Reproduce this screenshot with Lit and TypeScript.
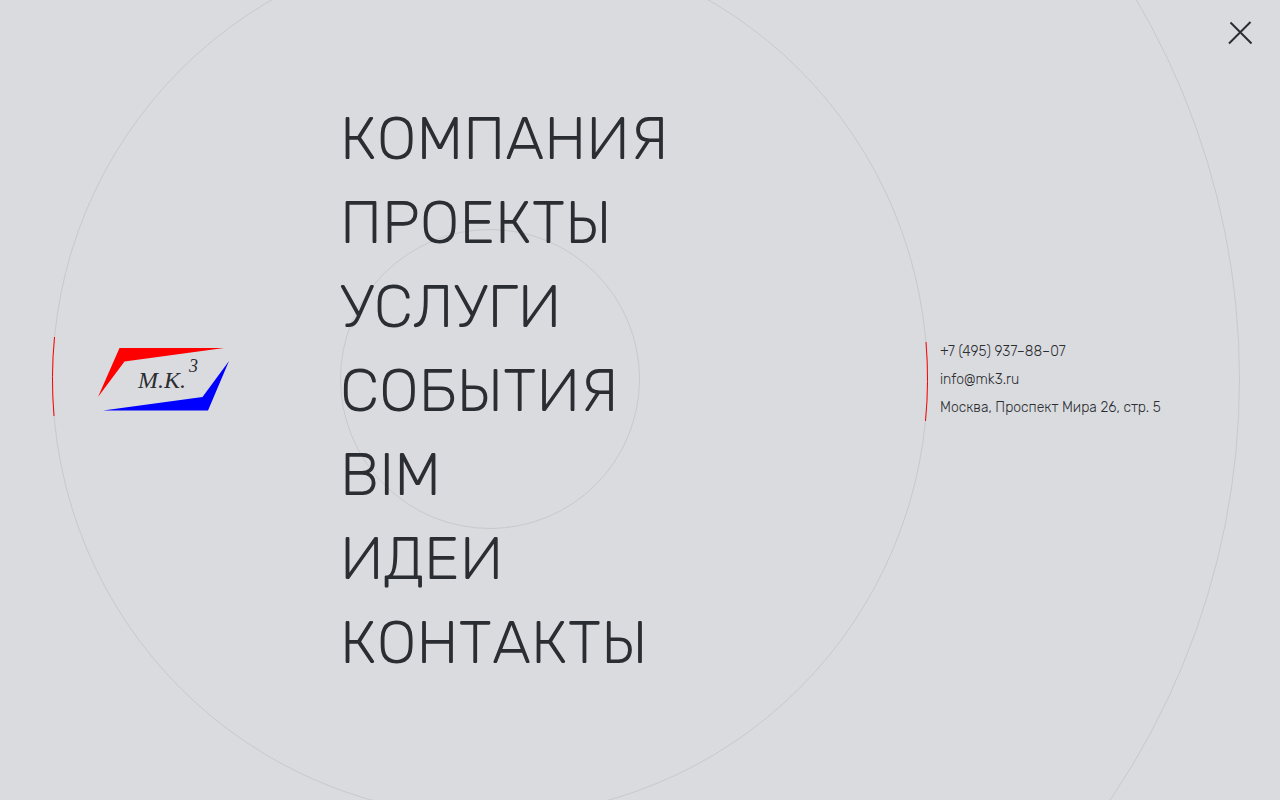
import { LitElement, html, css } from "lit";
import { customElement } from "lit/decorators.js";

const MENU = ["КОМПАНИЯ", "ПРОЕКТЫ", "УСЛУГИ", "СОБЫТИЯ", "BIM", "ИДЕИ", "КОНТАКТЫ"];

@customElement("app-root")
export class AppRoot extends LitElement {
  static styles = css`
    :host {
      display: block;
      font-family: Rubik, Roboto, "Noto Sans", sans-serif;
      font-weight: 300;
      color: #2a2d31;
    }
    .overlay {
      position: relative;
      box-sizing: border-box;
      min-height: 100vh;
      padding: 0 40px;
      overflow: hidden;
      background: #dadbdf;
      display: grid;
      grid-template-columns: 300px 600px 1fr;
      align-items: center;
    }
    .rings {
      position: absolute;
      left: -260px;
      top: calc(50% - 771px);
      width: 1500px;
      height: 1500px;
      pointer-events: none;
    }
    .logo {
      position: relative;
      margin: 0 0 40px 58px;
      line-height: 0;
    }
    .menu {
      position: relative;
      margin: 0 0 18px;
      padding: 0;
      list-style: none;
      font-size: 60px;
      line-height: 84px;
      font-kerning: none;
    }
    a {
      color: inherit;
      text-decoration: none;
    }
    .contacts {
      position: relative;
      margin-bottom: 40px;
      font-size: 14px;
      line-height: 28px;
      font-style: normal;
      display: flex;
      flex-direction: column;
    }
    .close {
      position: absolute;
      top: 12px;
      right: 20px;
      width: 40px;
      height: 40px;
      padding: 0;
      border: 0;
      background: none;
      color: inherit;
      cursor: pointer;
    }
    .close svg {
      display: block;
    }
  `;

  render() {
    return html`
      <div class="overlay">
        <svg class="rings" viewBox="0 0 1500 1500" fill="none" stroke="#c8c9ca" aria-hidden="true">
          <circle cx="750" cy="750" r="149.5" />
          <circle cx="750" cy="750" r="437.5" />
          <circle cx="750" cy="750" r="749.5" />
          <path stroke="#f00" d="M314.5 708A437.5 437.5 0 0 0 314 787" />
          <path stroke="#f00" d="M1186 713A437.5 437.5 0 0 1 1185.5 792" />
        </svg>

        <a class="logo" href="#" aria-label="М.К.3">
          <svg width="132" height="64" viewBox="0 0 132 64">
            <path fill="#f00" d="M21.500 0H126L26.500 13.500L0 49Z" />
            <path fill="#00f" d="M131 13L110 62.500H5L104.500 49Z" />
            <g fill="#2a2d31" font-family="Liberation Serif, serif" font-style="italic" font-weight="400">
              <text x="40" y="40" font-size="24">M.K.</text>
              <text x="91" y="24" font-size="18">3</text>
            </g>
          </svg>
        </a>

        <nav>
          <ul class="menu">
            ${MENU.map((item) => html`<li><a href="#">${item}</a></li>`)}
          </ul>
        </nav>

        <address class="contacts">
          <a href="tel:+74959378807">+7 (495) 937–88–07</a>
          <a href="mailto:info@mk3.ru">info@mk3.ru</a>
          <span>Москва, Проспект Мира 26, стр. 5</span>
        </address>

        <button class="close" type="button" aria-label="Закрыть">
          <svg width="40" height="40" viewBox="0 0 40 40" stroke="currentColor" stroke-width="2">
            <path d="M10.500 10.500L31.500 31.500M30.500 10L9 31.500" />
          </svg>
        </button>
      </div>
    `;
  }
}
